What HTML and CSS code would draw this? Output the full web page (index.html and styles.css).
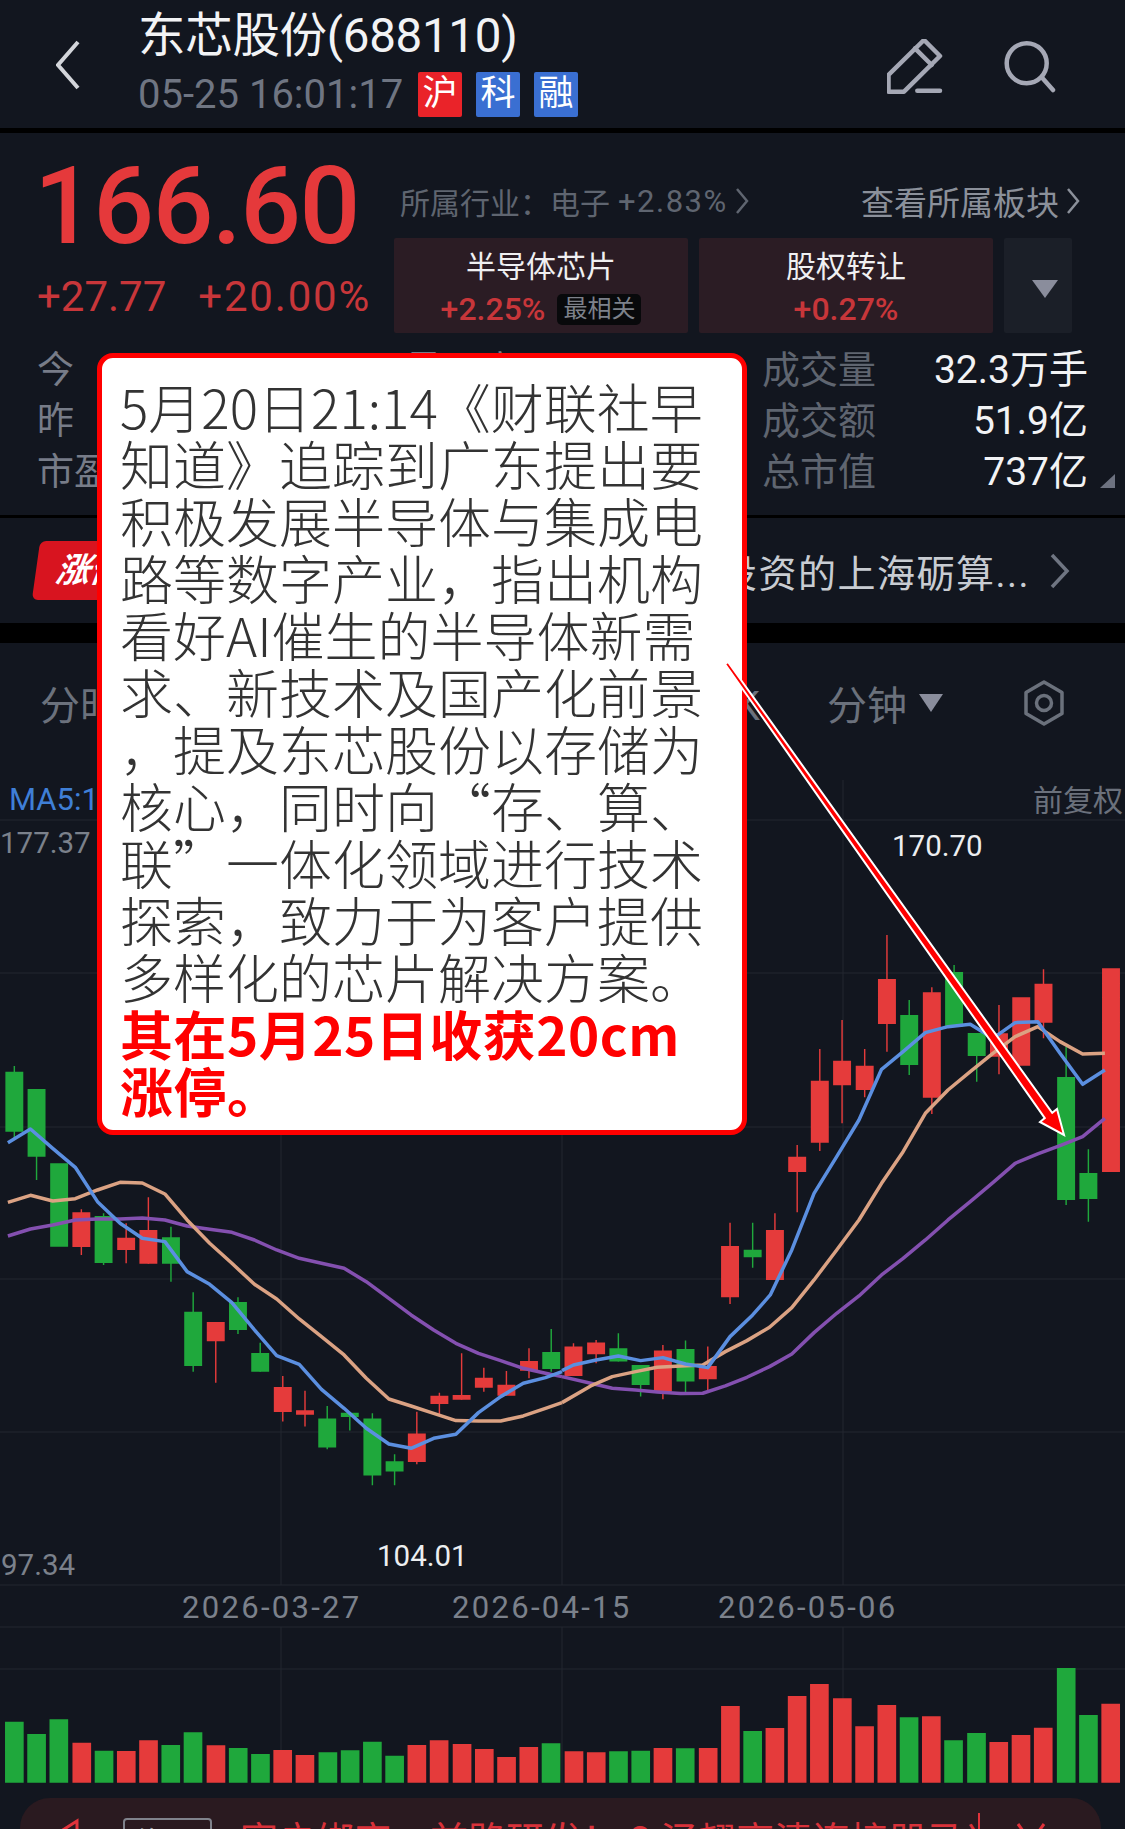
FILE: index.html
```html
<!DOCTYPE html>
<html lang="zh-CN">
<head>
    <meta charset="UTF-8">
    <meta name="viewport" content="width=device-width, initial-scale=1.0">
    <title>东芯股份(688110)</title>
    <link rel="stylesheet" href="styles.css">
</head>
<body>
<div class="page">
    <!-- TOP BAR -->
    <header class="topbar">
        <svg class="back-icon" viewBox="0 0 24 50"><path d="M22 2L2 25l20 23"/></svg>
        <div class="title-box">
            <h1 class="title">东芯股份(688110)</h1>
            <div class="sub-row">
                <span class="time">05-25 16:01:17</span>
                <span class="tag tag-red">沪</span>
                <span class="tag tag-blue">科</span>
                <span class="tag tag-blue">融</span>
            </div>
        </div>
        <svg class="edit-icon" viewBox="0 0 56 56"><path d="M1.5 52.7V36L37 1l16 16-36 35.700z"/><path d="M28 9.300L44.700 26M30.300 51.700H53"/></svg>
        <svg class="search-icon" viewBox="0 0 52 54"><circle cx="22.700" cy="23.300" r="20"/><path d="M37.700 37.300L49 50"/></svg>
    </header>

    <!-- QUOTE -->
    <section class="quote">
        <div class="quote-top">
            <div class="price-box">
                <div class="price">166.60</div>
                <div class="change"><span>+27.77</span><span class="change-pct">+20.00%</span></div>
            </div>
            <div class="sector-box">
                <div class="sector-line">
                    <span class="industry">所属行业：电子 <span class="num">+2.83%</span>
                        <svg class="chev" viewBox="0 0 14 28"><path d="M2 2l10 12L2 26"/></svg></span>
                    <span class="boards">查看所属板块
                        <svg class="chev" viewBox="0 0 14 28"><path d="M2 2l10 12L2 26"/></svg></span>
                </div>
                <div class="chips">
                    <div class="chip">
                        <div class="chip-name">半导体芯片</div>
                        <div class="chip-sub"><span>+2.25%</span><span class="best">最相关</span></div>
                    </div>
                    <div class="chip">
                        <div class="chip-name">股权转让</div>
                        <div class="chip-sub"><span>+0.27%</span></div>
                    </div>
                    <div class="chip chip-more"><i class="tri"></i></div>
                </div>
            </div>
        </div>
        <div class="stats">
            <div class="stats-left">
                <div class="stat-l"><span class="wide">今开</span><span class="wide">最高</span></div>
                <div class="stat-l"><span class="wide">昨收</span><span class="wide">最低</span></div>
                <div class="stat-l"><span>市盈(动)</span></div>
            </div>
            <div class="stats-right">
                <div class="stat-r"><span class="stat-name">成交量</span><span class="stat-val">32.3万手</span></div>
                <div class="stat-r"><span class="stat-name">成交额</span><span class="stat-val">51.9亿</span></div>
                <div class="stat-r"><span class="stat-name">总市值</span><span class="stat-val">737亿</span></div>
            </div>
            <i class="corner"></i>
        </div>
    </section>

    <!-- NEWS -->
    <section class="news">
        <div class="badge"><span>涨停</span></div>
        <div class="news-text">东芯股份投资的上海砺算...</div>
        <svg class="news-chev" viewBox="0 0 20 36"><path d="M2 2l15 16L2 34"/></svg>
    </section>
    <div class="band"></div>

    <!-- TABS -->
    <nav class="tabs">
        <div class="tabs-main">
            <span>分时</span><span>五日</span><span>日K</span><span>周K</span><span>月K</span>
        </div>
        <span class="tab-min">分钟<i class="tri tri-small"></i></span>
        <svg class="gear" viewBox="0 0 44 48"><path d="M22 3l18 10.500v21L22 45 4 34.500v-21z"/><circle cx="22" cy="24" r="7.500"/></svg>
    </nav>

    <!-- CHART, drawn in page coordinates -->
    <svg class="chart" viewBox="0 767 1125 1031">
        <path class="grid" d="M0 820H1125M0 973H1125M0 1127H1125M0 1279H1125M0 1432H1125M0 1585H1125M0 1627H1125M0 1669H1125M281 780V1585M562 780V1585M843 780V1585M281 1627V1783M562 1627V1783M843 1627V1783"/>

        <text class="axis ma5" x="9" y="810">MA5:1</text>
        <text class="axis" x="1033" y="811">前复权</text>
        <text class="axis small" x="0" y="853">177.37</text>
        <text class="axis small white" x="892" y="856">170.70</text>
        <text class="axis small" x="1" y="1575">97.34</text>
        <text class="axis small white" x="377" y="1566">104.01</text>
        <text class="axis date" x="182" y="1618">2026-03-27</text>
        <text class="axis date" x="452" y="1618">2026-04-15</text>
        <text class="axis date" x="718" y="1618">2026-05-06</text>

        <!-- candles 0-24 -->
        <g transform="translate(0 1000) scale(.3584 .3333)">
            <path class="wick-g" d="M40 198V415M102 267V540M289 640V795M477 680V845M539 877V1115M664 892V1002M726 1028V1115M913 1218V1348M976 1238V1292M1039 1240V1456M1101 1363V1456M1538 987V1115"/>
            <path class="wick-r" d="M227 628V765M352 670V790M414 592V791M602 966V1148M789 1128V1265M851 1172V1280M1163 1235V1393M1226 1178V1245M1288 1060V1199M1350 1103V1175M1413 1113V1187M1476 1045V1135"/>
            <path class="body-g" d="M40 215V395M102 267V470M165 490V740M289 648V789M477 712V791M539 935V1098M664 906V990M726 1059V1115M913 1256V1343M976 1238V1251M1039 1256V1427M1101 1384V1415M1538 1056V1107"/>
            <path class="body-r" d="M227 637V741M352 713V750M414 690V791M602 966V1024M789 1161V1236M851 1231V1244M1163 1301V1386M1226 1187V1212M1288 1185V1199M1350 1133V1163M1413 1154V1187M1476 1083V1112"/>
            <polyline class="ma-purple" points="22,708 85,687 147,675 210,660 272,657 335,657 397,654 460,660 522,678 585,688 647,697 710,720 772,750 835,775 897,790 960,805 1022,845 1085,895 1147,945 1210,990 1272,1030 1335,1060 1397,1082 1460,1105 1522,1120 1568,1130"/>
            <polyline class="ma-orange" points="22,607 85,586 147,603 210,596 272,570 335,547 397,549 460,582 522,660 585,730 647,790 710,853 772,897 835,957 897,1010 960,1065 1022,1135 1085,1197 1147,1218 1210,1240 1272,1262 1335,1263 1397,1263 1460,1248 1522,1225 1568,1208"/>
            <polyline class="ma-blue" points="22,428 85,387 147,445 210,502 272,605 335,670 397,715 460,725 522,815 585,853 647,908 710,990 772,1067 835,1093 897,1168 960,1225 1022,1285 1085,1332 1147,1345 1210,1315 1272,1303 1335,1238 1397,1190 1460,1150 1522,1133 1568,1115"/>
        </g>

        <!-- candles 25-49 -->
        <g transform="translate(562 900) scale(.35906 .3333)">
            <path class="wick-g" d="M157 1300V1385M219 1395V1490M344 1322V1478M531 968V1103M967 300V525M1092 195V380M1155 399V545M1404 440V915M1466 748V965"/>
            <path class="wick-r" d="M32 1330V1428M95 1320V1390M281 1335V1498M406 1340V1470M468 968V1212M593 940V1140M655 735V937M718 447V753M780 360V670M843 447V592M905 105V455M1030 262V642M1217 315V523M1341 208V415"/>
            <path class="body-g" d="M157 1345V1385M219 1395V1455M344 1347V1445M531 1049V1072M967 345V495M1092 216V380M1155 399V468M1404 531V900M1466 819V897"/>
            <path class="body-r" d="M32 1340V1428M95 1328V1363M281 1352V1475M406 1398V1438M468 1038V1192M593 990V1140M655 770V816M718 542V728M780 482V556M843 497V570M905 237V372M1030 277V593M1217 400V470M1279 292V497M1341 251V368M1529 205V816"/>
            <polyline class="ma-purple" points="0,1430 80,1450 140,1465 205,1470 265,1476 330,1481 392,1480 455,1458 515,1432 578,1400 640,1362 702,1298 765,1240 827,1188 890,1125 950,1075 1012,1020 1075,960 1137,905 1200,848 1262,790 1325,762 1387,737 1450,710 1512,655"/>
            <polyline class="ma-orange" points="0,1508 80,1458 140,1430 205,1415 265,1402 330,1398 392,1395 455,1355 515,1322 578,1282 640,1223 702,1140 765,1050 827,960 890,850 950,755 1012,640 1075,570 1137,515 1200,460 1262,410 1325,380 1387,425 1450,462 1512,460"/>
            <polyline class="ma-blue" points="0,1412 32,1395 95,1380 157,1368 219,1382 281,1373 344,1392 406,1403 468,1310 531,1245 580,1185 640,1050 702,880 765,770 827,660 890,508 950,455 1012,398 1075,380 1137,373 1200,415 1262,368 1325,365 1387,460 1450,553 1512,510"/>
        </g>

        <!-- volume -->
        <g transform="translate(0 1500) scale(.7175 .3333)">
            <path class="vol-g" d="M20 665V848M51 702V848M82 658V848M145 752V848M238 735V848M269 697V848M332 744V848M363 762V848M457 757V848M488 751V848M519 725V848M550 767V848M768 730V848M862 754V848M893 752V848M955 745V848M1049 693V848M1267 652V848M1329 721V848M1361 699V848M1486 504V848M1517 645V848"/>
            <path class="vol-r" d="M114 728V848M176 753V848M207 721V848M301 736V848M394 750V848M425 765V848M581 735V848M612 721V848M644 732V848M675 747V848M706 771V848M737 741V848M800 754V848M831 757V848M924 744V848M987 744V848M1018 618V848M1080 684V848M1111 588V848M1142 552V848M1174 595V848M1205 679V848M1236 615V848M1298 649V848M1392 726V848M1423 705V848M1454 683V848M1548 611V848"/>
        </g>
    </svg>

    <!-- TICKER, cut by the bottom of the screen -->
    <section class="ticker">
        <svg class="horn" viewBox="0 0 36 40"><path d="M2 22L32 3v32z"/></svg>
        <span class="ticker-tag">海通</span>
        <span class="ticker-text">客户绑定，前路研发！ 2 泾翘高清连接器马当</span>
        <i class="ticker-line"></i>
        <svg class="ticker-chev" viewBox="0 0 30 24"><path d="M2 2l13 18L28 2"/></svg>
    </section>

    <!-- ANNOTATION LAYER -->
    <div class="callout">
        5月20日21:14《财联社早<br>
        知道》追踪到广东提出要<br>
        积极发展半导体与集成电<br>
        路等数字产业，指出机构<br>
        看好AI催生的半导体新需<br>
        求、新技术及国产化前景<br>
        ，提及东芯股份以存储为<br>
        核心，同时向“存、算、<br>
        联”一体化领域进行技术<br>
        探索，致力于为客户提供<br>
        多样化的芯片解决方案。<br>
        <span class="callout-red">其在5月25日收获20cm<br>涨停。</span>
    </div>
    <svg class="arrow" viewBox="0 0 1125 1829"><polygon points="725,664 728,662 1052.200,1112.900 1057,1109 1064,1135 1040,1122 1044.800,1118.100"/></svg>
</div>
</body>
</html>
```

FILE: styles.css
```css
*{
    margin:0;
    padding:0;
    box-sizing:border-box;
}
body{
    background-color:#12161f;
    font-family:Roboto, "Noto Sans CJK SC", sans-serif;
}
.page{
    position:relative;
    width:1125px;
    height:1829px;
    overflow:hidden;
    background-color:#12161f;
}
svg{
    display:block;
}
/* TOP BAR */
.topbar{
    display:flex;
    height:133px;
    border-bottom:5px solid #000;
    padding-left:56px;
}
.back-icon{
    width:24px;
    height:50px;
    margin-top:40px;
    fill:none;
    stroke:#d3d5da;
    stroke-width:4;
}
.title-box{
    margin-left:58px;
    flex:1;
}
.title{
    font-size:47.500px;
    line-height:50px;
    margin-top:11px;
    font-weight:400;
    color:#f2f3f5;
    letter-spacing:-.3px;
}
.sub-row{
    display:flex;
    align-items:center;
    margin-top:10px;
}
.time{
    font-size:40px;
    color:#6f7582;
    width:280px;
}
.tag{
    width:44px;
    height:45px;
    margin-right:14px;
    border-radius:2px;
    color:#fff;
    font-size:35px;
    line-height:44px;
    text-align:center;
}
.tag-red{
    background-color:#ea2329;
}
.tag-blue{
    background-color:#3a6fd2;
}
.edit-icon{
    width:56px;
    height:56px;
    margin-top:39px;
    fill:none;
    stroke:#a5a8b5;
    stroke-width:4.500;
    stroke-linecap:round;
    stroke-linejoin:round;
}
.search-icon{
    width:52px;
    height:54px;
    margin:40px 69px 0 61px;
    fill:none;
    stroke:#a5a8b5;
    stroke-width:4.500;
    stroke-linecap:round;
}
/* QUOTE */
.quote{
    height:385px;
    border-bottom:3px solid #000;
}
.quote-top{
    display:flex;
}
.price-box{
    width:394px;
    padding:19px 0 0 34px;
}
.price{
    font-size:107px;
    line-height:110px;
    font-weight:500;
    letter-spacing:-1.500px;
    color:#e5393b;
}
.change{
    display:flex;
    gap:32px;
    margin:15px 0 0 3px;
    font-size:42px;
    line-height:40px;
    color:#c8363a;
}
.change-pct{
    letter-spacing:1.800px;
}
.sector-line{
    display:flex;
    justify-content:space-between;
    align-items:center;
    height:50px;
    margin-top:43px;
    width:686px;
    padding-left:6px;
    font-size:30px;
    color:#5f6570;
}
.industry{
    display:flex;
    align-items:center;
}
.num{
    margin-left:8px;
    font-size:31px;
    letter-spacing:1.500px;
}
.boards{
    display:flex;
    align-items:center;
    font-size:33px;
    color:#8b909a;
}
.chev{
    width:14px;
    height:28px;
    margin-left:7px;
    fill:none;
    stroke:currentColor;
    stroke-width:2.500;
}
.chips{
    display:flex;
    gap:11px;
    margin-top:12px;
}
.chip{
    width:294px;
    height:95px;
    background-color:#2b1c24;
    text-align:center;
    border-radius:2px;
}
.chip-name{
    font-size:30px;
    line-height:34px;
    margin-top:12px;
    color:#f0f0f2;
}
.chip-sub{
    display:flex;
    justify-content:center;
    align-items:center;
    gap:12px;
    margin-top:6px;
    height:38px;
    font-size:32px;
    font-weight:500;
    color:#c8363a;
}
.best{
    width:84px;
    height:31px;
    border-radius:5px;
    background-color:#08090b;
    font-size:24px;
    line-height:31px;
    font-weight:400;
    color:#7d818a;
}
.chip-more{
    width:68px;
    display:flex;
    justify-content:center;
    align-items:center;
    padding:6px 0 0 14px;
    background-color:#1b1f28;
}
.tri{
    display:block;
    width:0;
    height:0;
    border-left:13px solid transparent;
    border-right:13px solid transparent;
    border-top:18px solid #8a8d9c;
}
.tri-small{
    border-left-width:12px;
    border-right-width:12px;
    margin-left:12px;
}
/* STATS */
.stats{
    position:relative;
    display:flex;
    justify-content:space-between;
    margin-top:12px;
    padding:0 37px;
    font-size:37px;
    line-height:51px;
}
.stats-left{
    width:700px;
    flex:none;
}
.stat-l{
    display:flex;
    height:51px;
    color:#777c88;
}
.wide{
    width:368px;
    letter-spacing:40px;
    flex:none;
}
.stats-right{
    width:326px;
    flex:none;
}
.stat-r{
    display:flex;
    justify-content:space-between;
    height:51px;
}
.stat-name{
    color:#5f6570;
    font-size:38px;
}
.stat-val{
    color:#f2f3f5;
    font-size:39px;
}
.corner{
    position:absolute;
    right:10px;
    bottom:10px;
    width:0;
    height:0;
    border-left:15px solid transparent;
    border-bottom:14px solid #6d7280;
}
/* NEWS */
.news{
    display:flex;
    align-items:center;
    height:105px;
    padding-left:36px;
}
.badge{
    width:110px;
    height:59px;
    border-radius:6px;
    background-color:#d8141f;
    transform:skewX(-8deg);
    color:#fff;
    font-size:34px;
    font-weight:700;
    font-style:italic;
    line-height:59px;
    padding-left:20px;
    flex:none;
}
.news-text{
    flex:1;
    text-align:right;
    white-space:nowrap;
    overflow:hidden;
    font-size:38px;
    letter-spacing:1.500px;
    color:#c8ccd2;
}
.news-chev{
    width:20px;
    height:36px;
    margin:0 55px 0 20px;
    fill:none;
    stroke:#6f7582;
    stroke-width:3.500;
}
.band{
    height:20px;
    background-color:#000;
}
/* TABS */
.tabs{
    display:flex;
    align-items:center;
    height:124px;
    padding:0 0 4px 40px;
    font-size:40px;
    color:#6b717c;
}
.tabs-main{
    display:flex;
    justify-content:space-between;
    width:720px;
}
.tab-min{
    display:flex;
    align-items:center;
    margin-left:67px;
}
.gear{
    width:44px;
    height:48px;
    margin-left:79px;
    fill:none;
    stroke:#6b717c;
    stroke-width:3.500;
    stroke-linejoin:round;
}
/* CHART */
.chart{
    width:1125px;
    height:1031px;
}
.grid{
    fill:none;
    stroke:#232730;
    stroke-width:1;
}
.axis{
    font-size:30px;
    fill:#6b717c;
}
.ma5{
    font-size:31px;
    fill:#3f7fd6;
}
.small{
    font-size:29.500px;
    fill:#7b818b;
}
.white{
    fill:#eceef0;
}
.date{
    font-size:31px;
    letter-spacing:2.300px;
    fill:#7b818b;
}
.wick-g,.wick-r,.body-g,.body-r,.vol-g,.vol-r{
    fill:none;
}
.wick-g{
    stroke:#1fa83c;
    stroke-width:4;
}
.wick-r{
    stroke:#e53b3b;
    stroke-width:4;
}
.body-g{
    stroke:#1fa83c;
    stroke-width:50;
}
.body-r{
    stroke:#e53b3b;
    stroke-width:50;
}
.vol-g{
    stroke:#1fa83c;
    stroke-width:26;
}
.vol-r{
    stroke:#e53b3b;
    stroke-width:26;
}
polyline{
    fill:none;
    stroke-width:3.500;
    vector-effect:non-scaling-stroke;
    stroke-linejoin:round;
}
.ma-blue{
    stroke:#5b8fe0;
}
.ma-orange{
    stroke:#dba283;
}
.ma-purple{
    stroke:#8450b0;
}
/* TICKER */
.ticker{
    display:flex;
    align-items:flex-start;
    height:100px;
    margin:0 24px 0 20px;
    padding:20px 0 0 25px;
    border-radius:30px 30px 0 0;
    background-color:#2a1a20;
    color:#d8323a;
}
.horn{
    width:36px;
    height:40px;
    flex:none;
    fill:none;
    stroke:#e0333b;
    stroke-width:3;
}
.ticker-tag{
    width:89px;
    height:50px;
    margin-left:42px;
    border:2px solid #80838c;
    border-radius:4px;
    font-size:30px;
    line-height:46px;
    text-align:center;
    color:#9a9da5;
    flex:none;
}
.ticker-text{
    width:738px;
    margin:-2px 0 0 28px;
    font-size:38px;
    white-space:nowrap;
    overflow:hidden;
    line-height:50px;
}
.ticker-line{
    width:2px;
    height:40px;
    margin-top:-5px;
    background-color:#e0333b;
    flex:none;
}
.ticker-chev{
    width:30px;
    height:24px;
    margin:4px 0 0 36px;
    fill:none;
    stroke:#e0333b;
    stroke-width:3;
}
/* CALLOUT AND ARROW */
.callout{
    position:absolute;
    left:97px;
    top:353px;
    width:650px;
    height:782px;
    padding:20px 0 0 18px;
    border:5px solid #f00;
    border-radius:16px;
    background-color:#fff;
    font-family:"Noto Sans CJK SC", sans-serif;
    font-size:53px;
    font-weight:300;
    line-height:57px;
    color:#333;
    white-space:nowrap;
}
.callout-red{
    color:#f00;
    font-weight:700;
    letter-spacing:.5px;
}
.arrow{
    position:absolute;
    left:0;
    top:0;
    width:1125px;
    height:1829px;
    fill:#f00;
    stroke:#fff;
    stroke-width:2;
}
```
